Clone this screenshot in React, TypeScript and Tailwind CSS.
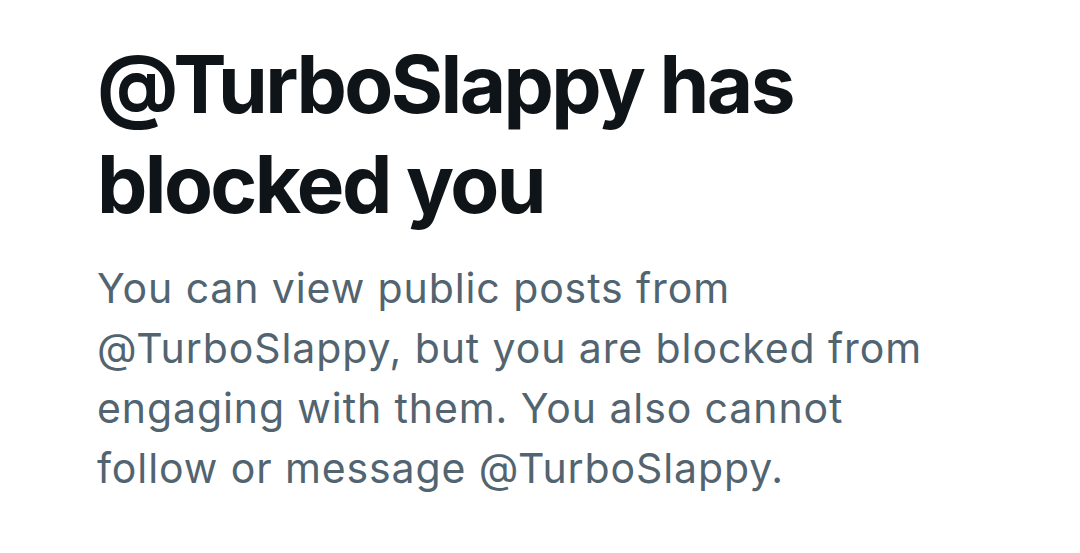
export default function App() {
  return (
    <div className="min-h-screen bg-white pl-[97px] pt-[34px] font-['Inter',sans-serif]">
      <h1 className="text-[80px] leading-[100px] font-bold tracking-[-2.6px] text-[#0f1419]">
        @TurboSlappy has
        <br />
        blocked you
      </h1>
      <p className="mt-[24px] text-[41px] leading-[60px] tracking-[0.9px] text-[#536471]">
        You can view public posts from
        <br />
        @TurboSlappy, but you are blocked from
        <br />
        engaging with them. You also cannot
        <br />
        follow or message @TurboSlappy.
      </p>
    </div>
  );
}
